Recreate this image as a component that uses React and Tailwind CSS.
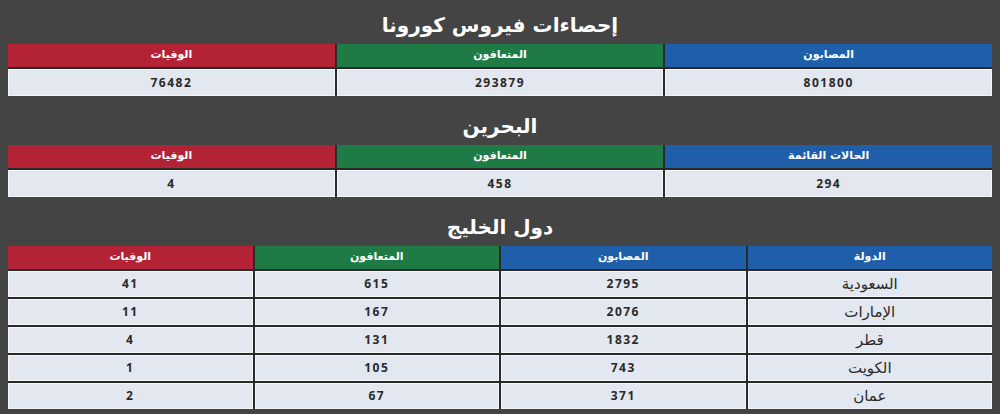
const totals = {
  headers: [
    { label: "المصابون", color: "bg-[#1f5ea9]" },
    { label: "المتعافون", color: "bg-[#1e7b45]" },
    { label: "الوفيات", color: "bg-[#b42235]" },
  ],
  values: ["801800", "293879", "76482"],
};

const bahrain = {
  headers: [
    { label: "الحالات القائمة", color: "bg-[#1f5ea9]" },
    { label: "المتعافون", color: "bg-[#1e7b45]" },
    { label: "الوفيات", color: "bg-[#b42235]" },
  ],
  values: ["294", "458", "4"],
};

const gulfHeaders = [
  { label: "الدولة", color: "bg-[#1f5ea9]" },
  { label: "المصابون", color: "bg-[#1f5ea9]" },
  { label: "المتعافون", color: "bg-[#1e7b45]" },
  { label: "الوفيات", color: "bg-[#b42235]" },
];

const gulf = [
  ["السعودية", "2795", "615", "41"],
  ["الإمارات", "2076", "167", "11"],
  ["قطر", "1832", "131", "4"],
  ["الكويت", "743", "105", "1"],
  ["عمان", "371", "67", "2"],
];

const arabic = "font-['DejaVu_Sans','Noto_Sans',sans-serif]";
const nums = "font-['Open_Sans','Noto_Sans',sans-serif]";

function Title({ children, first }) {
  return (
    <div
      className={`flex items-center justify-center ${
        first ? "h-[44px] pt-[6px]" : "h-[49px] pt-[10px]"
      }`}
    >
      <h2 className={`${arabic} text-[20px] font-bold text-white leading-none`}>
        {children}
      </h2>
    </div>
  );
}

function HeaderCell({ label, color }) {
  return (
    <div
      className={`${color} ${arabic} h-[23px] flex items-center justify-center text-[11px] font-bold text-white`}
    >
      {label}
    </div>
  );
}

function Cell({ children, text, tall }) {
  return (
    <div
      className={`${tall ? "h-[27px]" : "h-[26px]"} flex items-center justify-center bg-[#e3e7f0] border border-[#f3f5f9] text-[#2a2a2a] ${
        text
          ? `${arabic} text-[15px]`
          : `${nums} text-[12px] font-bold tracking-[1.5px]`
      }`}
    >
      {children}
    </div>
  );
}

function StatTable({ data }) {
  return (
    <div className="grid grid-cols-3 gap-[2px] bg-[#2a2a2a]">
      {data.headers.map((h) => (
        <HeaderCell key={h.label} {...h} />
      ))}
      {data.values.map((v, i) => (
        <Cell key={i} tall>
          {v}
        </Cell>
      ))}
    </div>
  );
}

export default function App() {
  return (
    <div dir="rtl" className="w-[1000px] h-[414px] bg-[#444444] px-[8px] overflow-hidden">
      <Title first>إحصاءات فيروس كورونا</Title>
      <StatTable data={totals} />

      <Title>البحرين</Title>
      <StatTable data={bahrain} />

      <Title>دول الخليج</Title>
      <div className="grid grid-cols-4 gap-[2px] bg-[#2a2a2a]">
        {gulfHeaders.map((h) => (
          <HeaderCell key={h.label + h.color} {...h} />
        ))}
        {gulf.map((row) =>
          row.map((v, i) => (
            <Cell key={row[0] + i} text={i === 0}>
              {v}
            </Cell>
          ))
        )}
      </div>
    </div>
  );
}
